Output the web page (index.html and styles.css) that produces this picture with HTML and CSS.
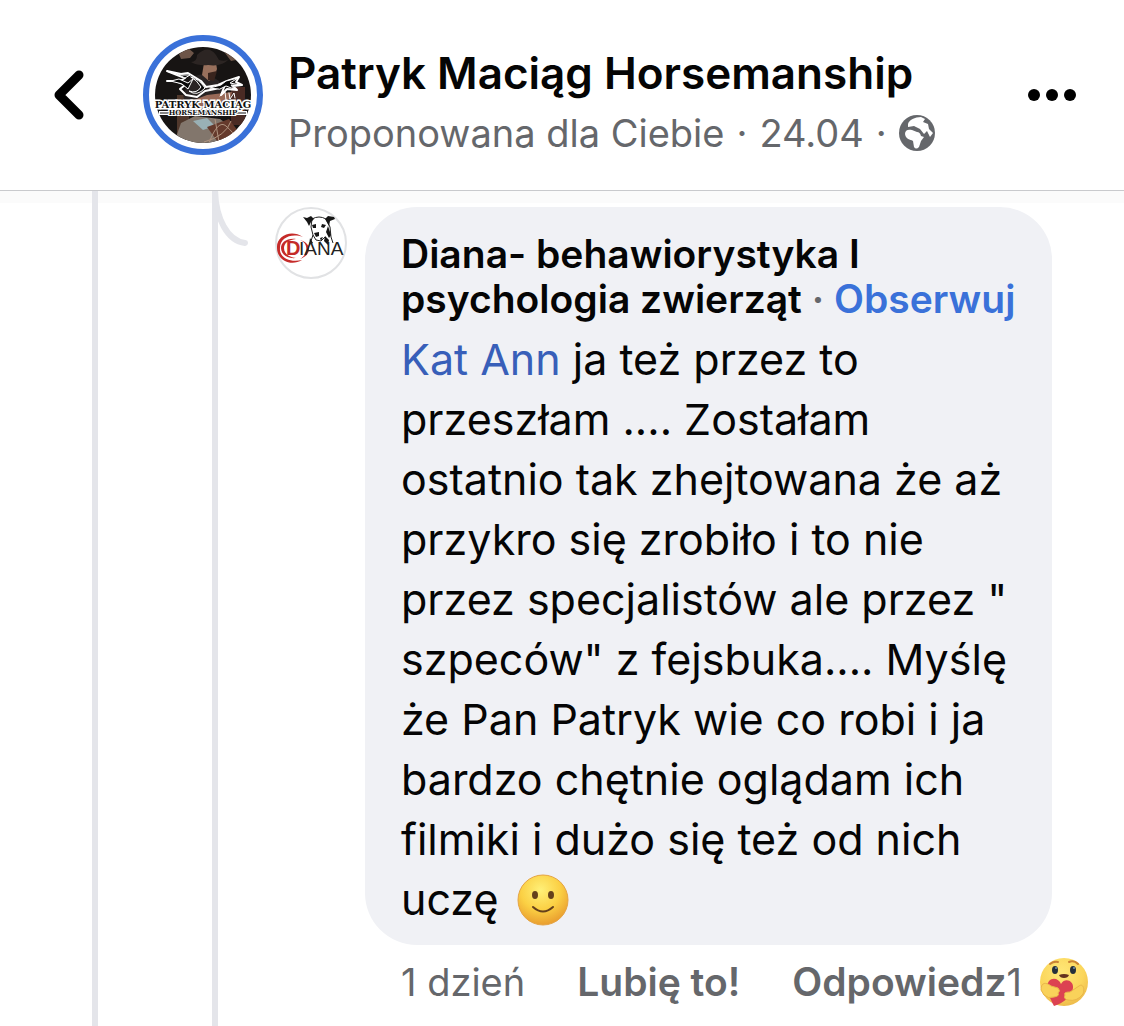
FILE: index.html
```html
<!DOCTYPE html>
<html lang="pl">
  <head>
    <meta charset="UTF-8" />
    <meta name="viewport" content="width=device-width, initial-scale=1" />
    <title>Patryk Maciąg Horsemanship</title>
    <link rel="stylesheet" href="styles.css">
  </head>
  <body>
    <header class="header">
      <button type="button" class="back" aria-label="Wstecz">
        <svg width="30" height="50" viewBox="0 0 30 50">
          <path d="M25 5 L5 25 L25 45" fill="none" stroke="#000" stroke-width="9" stroke-linecap="round" stroke-linejoin="round" />
        </svg>
      </button>
      <svg class="page-avatar" viewBox="0 0 120 120" role="img" aria-label="Patryk Maciąg Horsemanship">
        <defs>
          <clipPath id="photo"><circle cx="60" cy="60" r="48" /></clipPath>
        </defs>
        <circle cx="60" cy="60" r="57" fill="#fff" stroke="#3a71d9" stroke-width="6" />
        <g clip-path="url(#photo)">
          <rect x="10" y="10" width="100" height="100" fill="#171413" />
          <path d="M36 19 l9 -6 6 5 -4 5 -9 1z M79 14 l9 4 5 7 -5 1z" fill="#6d5548" />
          <path d="M88 52 h14 v38 h-14z" fill="#4a2b24" />
          <path d="M34 60 h12 v40 h-12z" fill="#50382c" />
          <!-- rider -->
          <path d="M47 44 Q60 34 76 46 L82 62 75 82 45 80 40 60Z" fill="#292424" />
          <path d="M61 28 H73 L74 34 71 42 66 46 59 40Z" fill="#98705c" />
          <path d="M65 38 L74 36 71 46 65 45Z" fill="#39241d" />
          <path d="M48 27 Q54 27 54 20 Q65 9 73 20 L76 25 Q83 27 86 24 Q79 32 65 30 Q55 31 48 27Z" fill="#2c2523" />
          <path d="M38 70 L64 60 89 57 87 64 66 71 45 78Z" fill="#986957" />
          <path d="M31 108 L38 88 52 81 77 84 91 94 85 110Z" fill="#82766c" />
          <path d="M50 86 L64 83 72 91 60 95Z" fill="#99b0b5" />
          <path d="M64 92 L86 84 95 96 77 110Z" fill="#653a2c" />
          <path d="M66 108 Q75 84 83 91 T92 102 M61 107 Q83 101 88 86 M72 84 L76 107" fill="none" stroke="#b09480" stroke-width="1" />
          <!-- running horses -->
          <g stroke="#fff" stroke-linejoin="round" stroke-linecap="round">
            <path d="M24 36 L38 39 45 38 58 46 63 52 75 50 84 46 96 42 93 47 99 50 90 51 94 55 84 54 78 60 82 50 72 54 62 56 54 62 43 60 37 54 42 50 33 46 24 46 37 46 42 43 34 40Z" fill="none" stroke-width="2" />
            <path d="M26 37 L39 40 47 40 42 43 36 40Z M28 46 L36 44 45 48 50 44 45 54 39 49Z M48 42 Q56 44 62 53 Q54 62 46 56 Q54 59 58 52 Q54 45 48 42Z M67 53 L78 50 83 46 95 43 87 48 97 50 88 50 91 54 83 51 77 54Z" fill="#080808" stroke-width="1" />
            <path d="M77 61 L82 57 83 65 M86 58 L87 64 91 58 92 63" fill="none" stroke-width="1" />
          </g>
        </g>
        <path d="M16 78 H28 M92 78 H104" stroke="#fff" stroke-width="4" />
        <path d="M17 78 H28 M92 78 H103" stroke="#111" stroke-width="1" />
        <text class="logo-text" x="60" y="73" font-size="10" stroke-width="3">PATRYK MACIĄG</text>
        <text class="logo-text" x="60" y="80" font-size="7" stroke-width="2">HORSEMANSHIP</text>
      </svg>
      <div class="heading">
        <h1 class="page-name">Patryk Maciąg Horsemanship</h1>
        <p class="meta">
          <span>Proponowana dla Ciebie</span>
          <span>·</span>
          <span>24.04</span>
          <span>·</span>
          <svg class="globe" viewBox="0 0 36 36" role="img" aria-label="Publiczne">
            <circle cx="18" cy="18" r="18" fill="#65676b" />
            <path d="M9 9 C10 5 16 2 22 2 L26 4 24 7 29 9 30 14 34 18 31 22 28 16 25 19 21 14 15 11 9 12Z" fill="#fff" />
            <path d="M6 19 C6 15 9 14 13 15 L18 17 Q21 17 22 21 L25 22 22 26 20 32 Q17 35 15 32 L14 26 C11 24 7 25 6 19Z" fill="#fff" />
          </svg>
        </p>
      </div>
      <button type="button" class="more" aria-label="Więcej">
        <svg width="48" height="12" viewBox="0 0 48 12">
          <circle cx="6" cy="6" r="6" /><circle cx="24" cy="6" r="6" /><circle cx="42" cy="6" r="6" />
        </svg>
      </button>
    </header>

    <main class="thread">
      <div class="replies">
        <svg class="branch" viewBox="0 0 40 60" aria-hidden="true">
          <path d="M3 -4 C3 28 16 50 33 52" fill="none" stroke="#e4e5ea" stroke-width="6" stroke-linecap="round" />
        </svg>
        <article class="comment">
          <svg class="comment-avatar" viewBox="0 0 72 72" role="img" aria-label="Diana">
            <circle cx="36" cy="36" r="35" fill="#fff" stroke="#e1e2e4" stroke-width="2" />
            <!-- dog -->
            <path d="M37 12 Q44 8 51 12 L55 20 56 30 58 36 M37 12 L36 20 38 28 41 33 46 34 50 30 M38 28 L35 37" fill="none" stroke="#222" stroke-width="1" />
            <path d="M28 10 L32 11 36 9 39 12 36 15 34 19 32 15Z M50 12 L53 9 59 10 60 12 55 14 54 19Z" fill="#161616" />
            <path d="M37 18 L41 17 41 21 38 21Z M47 17 L51 18 49 21 46 20Z M39 26 L44 25 44 29 41 30Z M53 19 L56 28 54 31 51 25Z M50 29 L54 33 53 38 49 34Z M45 31 L48 30 46 34Z M35 31 L38 36 34 38Z" fill="#161616" />
            <path d="M28 30 C16 22 1 29 2 41 C2 53 16 60 27 53 C14 56 4 50 5 41 C5 31 16 26 28 30Z" fill="#c52b29" />
            <path d="M21 32 C11 31 6 36 6 41 C6 47 12 52 21 51 C13 50 9 46 9 41 C9 36 13 33 21 32Z" fill="#c52b29" />
            <path d="M25 33 C34 36 33 48 25 52 C37 48 37 36 25 33Z" fill="#c52b29" />
            <text class="diana-initial" x="11" y="48">D</text>
            <text class="diana-rest" x="24" y="48">IANA</text>
          </svg>
          <div class="comment-body">
            <div class="bubble">
              <div class="author">Diana- behawiorystyka I<br>psychologia zwierząt <span class="dot">·</span> <a href="#" class="follow">Obserwuj</a></div>
              <p class="text">
                <a href="#" class="mention">Kat Ann</a> ja też przez to<br>
                przeszłam .... Zostałam<br>
                ostatnio tak zhejtowana że aż<br>
                przykro się zrobiło i to nie<br>
                przez specjalistów ale przez "<br>
                szpeców" z fejsbuka.... Myślę<br>
                że Pan Patryk wie co robi i ja<br>
                bardzo chętnie oglądam ich<br>
                filmiki i dużo się też od nich<br>
                uczę
                <svg class="smile" viewBox="0 0 52 52" role="img" aria-label="uśmiech">
                  <defs>
                    <radialGradient id="face" cx="45%" cy="30%" r="72%">
                      <stop offset="0" stop-color="#fff078" />
                      <stop offset="0.55" stop-color="#fbd044" />
                      <stop offset="1" stop-color="#e89a2d" />
                    </radialGradient>
                  </defs>
                  <circle cx="26" cy="26" r="25" fill="url(#face)" stroke="#e5a443" stroke-width="1" />
                  <ellipse cx="18" cy="21" rx="3" ry="4" fill="#65401b" />
                  <ellipse cx="34" cy="21" rx="3" ry="4" fill="#65401b" />
                  <path d="M16 33 Q26 42 36 33" fill="none" stroke="#65401b" stroke-width="2" stroke-linecap="round" />
                </svg>
              </p>
            </div>
            <div class="actions">
              <span class="age">1 dzień</span>
              <button type="button" class="action">Lubię to!</button>
              <button type="button" class="action">Odpowiedz</button>
              <span class="count">1</span>
              <svg class="care" viewBox="0 0 48 48" role="img" aria-label="Trzymaj się">
                <defs>
                  <radialGradient id="care-face" cx="45%" cy="30%" r="70%">
                    <stop offset="0" stop-color="#ffe778" />
                    <stop offset="0.65" stop-color="#fbd65b" />
                    <stop offset="1" stop-color="#eebc4c" />
                  </radialGradient>
                </defs>
                <circle cx="24" cy="24" r="24" fill="url(#care-face)" />
                <path d="M10 6 Q14 3 18 4 M29 4 Q34 2 38 6" fill="none" stroke="#c98235" stroke-width="2" stroke-linecap="round" />
                <ellipse cx="15" cy="12" rx="3" ry="4" fill="#252f3b" />
                <ellipse cx="33" cy="12" rx="3" ry="4" fill="#252f3b" />
                <circle cx="16" cy="10" r="1" fill="#7594ac" />
                <circle cx="34" cy="10" r="1" fill="#7594ac" />
                <path d="M19 17 Q24 15 29 17 Q28 20 24 20 Q20 20 19 17Z" fill="#65331e" />
                <path d="M14 48 C10 40 4 29 9 23 C13 19 19 21 21 26 C25 19 34 23 33 30 C32 39 23 45 14 48Z" fill="#dc4251" />
                <path d="M1 32 C1 24 6 24 11 28 L18 30 Q21 33 18 35 Q20 38 14 39 Q8 41 4 37Z M39 28 C43 25 45 31 43 36 Q37 44 28 42 Q23 41 25 37 Q23 34 30 34Z" fill="#f9d25a" stroke="#e9b54a" stroke-width="1" />
              </svg>
            </div>
          </div>
        </article>
      </div>
    </main>
  </body>
</html>
```
FILE: styles.css
```css
* {
  box-sizing: border-box;
}
body {
  margin: 0;
  min-height: 100vh;
  display: flex;
  flex-direction: column;
  background: #ffffff;
  color: #050505;
  font-family: Inter, "Liberation Sans", sans-serif;
}
h1,
p {
  margin: 0;
}
a {
  text-decoration: none;
}
svg {
  display: block;
  flex: none;
}
button {
  padding: 0;
  border: none;
  background: none;
  color: inherit;
  font: inherit;
  cursor: pointer;
}
.header {
  display: flex;
  align-items: center;
  padding: 35px 48px;
  border-bottom: 1px solid #c9cacd;
  box-shadow: 0 12px 0 #fbfbfb;
}
.back {
  margin: 0 59px 0 6px;
}
.page-avatar {
  width: 120px;
  height: 120px;
  margin-right: 25px;
}
.logo-text {
  font-family: "DejaVu Serif", serif;
  font-weight: bold;
  text-anchor: middle;
  fill: #111111;
  stroke: #ffffff;
  paint-order: stroke;
}
.heading {
  flex: 1;
  padding-top: 12px;
  white-space: nowrap;
}
.page-name {
  margin-bottom: 12px;
  font-size: 44px;
  font-weight: 600;
  line-height: 52px;
}
.meta {
  display: flex;
  align-items: center;
  gap: 12px;
  color: #65676b;
  font-size: 38px;
  line-height: 44px;
}
.globe {
  width: 36px;
  height: 36px;
}
.thread {
  flex: 1;
  display: flex;
  margin-left: 92px;
  border-left: 6px solid #e4e5ea;
}
.replies {
  position: relative;
  flex: 1;
  margin-left: 114px;
  border-left: 6px solid #e4e5ea;
}
.branch {
  position: absolute;
  top: 0;
  left: -6px;
  width: 40px;
  height: 60px;
}
.comment {
  display: flex;
  gap: 18px;
  padding: 16px 36px 12px 57px;
}
.comment-avatar {
  width: 72px;
  height: 72px;
}
.diana-initial {
  fill: #c52b29;
  font-family: "Liberation Sans", sans-serif;
  font-size: 20px;
  font-weight: bold;
}
.diana-rest {
  fill: #222222;
  font-family: "Liberation Sans", sans-serif;
  font-size: 19px;
}
.comment-body {
  flex: 1;
}
.bubble {
  margin-right: 36px;
  padding: 24px 36px 16px;
  border-radius: 52px;
  background: #f0f1f5;
  white-space: nowrap;
}
.author {
  margin-bottom: 8px;
  font-size: 39px;
  font-weight: 600;
  line-height: 45px;
}
.dot {
  color: #65676b;
}
.follow {
  color: #3a71d9;
}
.text {
  font-size: 43px;
  line-height: 60px;
}
.mention {
  color: #385fb9;
}
.smile {
  display: inline-block;
  width: 52px;
  height: 52px;
  margin-left: 6px;
  vertical-align: -11px;
}
.actions {
  display: flex;
  align-items: center;
  padding: 11px 0 0 36px;
  color: #65676b;
  font-size: 39px;
  line-height: 52px;
  white-space: nowrap;
}
.age,
.action {
  margin-right: 52px;
}
.age,
.count {
  font-size: 38px;
}
.action {
  font-weight: 600;
}
.action:last-of-type {
  margin-right: 0;
}
.care {
  width: 48px;
  height: 48px;
  margin-left: auto;
}
```
